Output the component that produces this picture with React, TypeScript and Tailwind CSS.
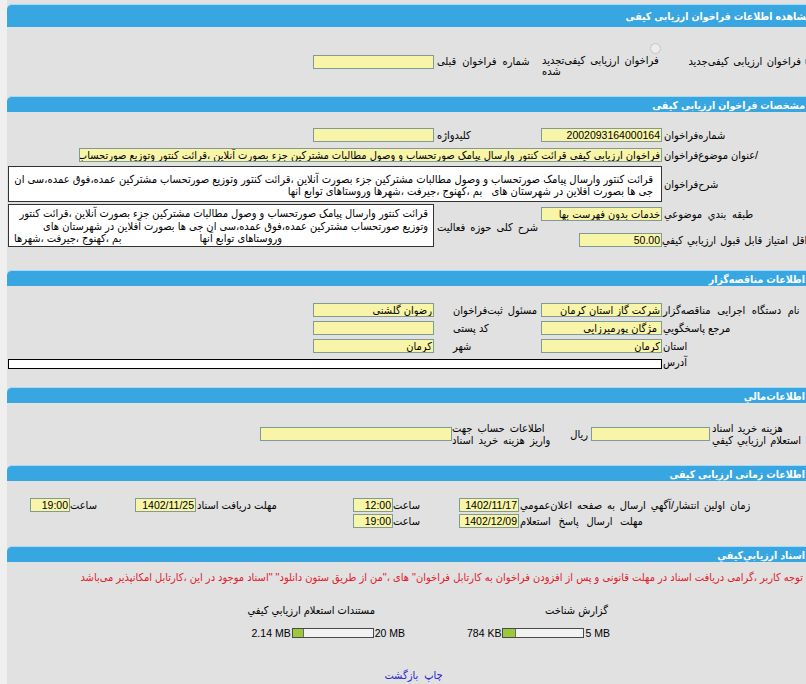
import React from 'react';

const font = "font-['Liberation_Sans','DejaVu_Sans_Condensed','DejaVu_Sans',sans-serif]";

const Bar: React.FC<{ title: string; big?: boolean }> = ({ title, big }) => (
  <div
    className={`flex items-center rounded-t-[5px] border-t border-[#a7daf5] bg-[#38a6e1] text-[10.5px] font-bold text-white ${
      big ? 'h-[23px] pr-[8px]' : 'h-[16px] pr-[15px]'
    }`}
  >
    {title}
  </div>
);

// label that starts at its left edge and runs to the right when long
const L: React.FC<{ children: React.ReactNode; className?: string }> = ({ children, className = '' }) => (
  <div dir="ltr" className={`text-left whitespace-nowrap ${className}`}>
    <span dir="rtl">{children}</span>
  </div>
);

const Box: React.FC<{ value?: string; num?: boolean; className?: string }> = ({ value = '', num, className = '' }) => (
  <div
    className={`h-[14px] overflow-hidden whitespace-nowrap border border-[#7e9c95] bg-[#f8f5a8] px-px leading-[12px] text-black ${
      num ? 'text-[10.5px]' : 'text-[11px]'
    } ${className}`}
  >
    {value}
  </div>
);

const Progress: React.FC<{ used: string; max: string; fill: number }> = ({ used, max, fill }) => (
  <div dir="ltr" className="flex h-[10px] items-center gap-px text-[10.5px]">
    <span>{used}</span>
    <div className="h-[10px] w-[82px] border border-[#4a4a4a] bg-[#f2f2f2]">
      <div className="h-full border-r border-[#6a6a6a] bg-[#9cc83a]" style={{ width: fill }} />
    </div>
    <span>{max}</span>
  </div>
);

const notice =
  'توجه کاربر ،گرامی دریافت اسناد در مهلت قانونی و پس از افزودن فراخوان به کارتابل فراخوان" های ،"من از طریق ستون دانلود" "اسناد موجود در این ،کارتابل امکانپذیر می‌باشد';

const subject =
  'فراخوان ارزيابي کيفي قرائت کنتور وارسال پیامک صورتحساب و وصول مطالبات مشترکین جزء بصورت آنلاین ،قرائت کنتور وتوزیع صورتحساب مشترکین عمده،فوق عمده،سی ان جی ها';

export default function App() {
  return (
    <div className={`h-[684px] w-[806px] overflow-hidden bg-[#efefef] text-[11px] leading-[14px] text-black ${font}`}>
      <div dir="rtl" className="ml-[7px] h-[684px] w-[813px] bg-[#e1e1e1] pt-[4px]">
        <Bar big title="مشاهده اطلاعات فراخوان ارزیابی کیفی" />

        {/* نوع فراخوان */}
        <div className="flex h-[69px] items-start">
          <div className="mt-[27px] flex w-[158px] items-center">
            <span className="mr-[2px] ml-[4px] h-[13px] w-[13px] shrink-0 rounded-full border border-[#888] bg-white" />
            <span className="whitespace-nowrap [word-spacing:1.5px]">فراخوان ارزیابی کیفی‌جدید</span>
          </div>
          <div className="flex w-[121px] flex-col items-start">
            <span className="mt-[16px] mr-px h-[11px] w-[11px] rounded-full border border-[#c4c4c4] bg-[#ececec]" />
            <L className="mt-px mr-[10px] w-[110px] leading-[11px] [word-spacing:2px]">
              فراخوان ارزیابی کیفی‌تجدید
              <br />
              شده
            </L>
          </div>
          <L className="mt-[27px] w-[107px] pl-[3px] [word-spacing:3px]">شماره فراخوان قبلی</L>
          <Box className="mt-[28px] w-[121px]" />
        </div>

        <Bar title="مشخصات فراخوان ارزیابی کیفی" />
        <div className="grid h-[158px] grid-cols-[158px_121px_107px_121px_1fr] grid-rows-[20px_20px_38px_21px_31px] content-start items-center pt-[13px]">
          <L className="col-start-1 row-start-1 pl-[2px]">شماره‌فراخوان</L>
          <Box num className="col-start-2 row-start-1 w-[121px]" value="2002093164000164" />
          <L className="col-start-3 row-start-1 pl-[3px]">کلیدواژه</L>
          <Box className="col-start-4 row-start-1 w-[121px]" />

          <L className="col-start-1 row-start-2 pl-[2px]">/عنوان موضوع‌فراخوان</L>
          <Box className="col-span-4 col-start-2 row-start-2 w-[583px]" value={subject} />

          <L className="col-start-1 row-start-3 pl-[2px]">شرح‌فراخوان</L>
          <div className="col-span-4 col-start-2 row-start-3 h-[36px] w-[654px] overflow-hidden border border-[#333] bg-white pt-[6px] pr-[8px] text-[11.1px] leading-[12px] whitespace-nowrap">
            قرائت کنتور وارسال پیامک صورتحساب و وصول مطالبات مشترکین جزء بصورت آنلاین ،قرائت کنتور وتوزیع صورتحساب مشترکین عمده،فوق عمده،سی ان
            <br />
            جی ها بصورت آفلاین در شهرستان های &nbsp; بم ،کهنوج ،جیرفت ،شهرها وروستاهای توابع آنها
          </div>

          <L className="col-start-1 row-start-4 pl-[2px] [word-spacing:2.5px]">طبقه بندي موضوعي</L>
          <Box className="col-start-2 row-start-4 w-[121px]" value="خدمات بدون فهرست بها" />
          <L className="col-start-3 row-span-2 row-start-4 mt-[17px] self-start pl-[3px] [word-spacing:2px]">شرح کلی حوزه فعالیت</L>
          <div className="col-span-2 col-start-4 row-span-2 row-start-4 mt-px h-[43px] w-[426px] self-start overflow-hidden border border-[#333] bg-white pt-[2px] pr-[5px] pl-[5px] leading-[12.5px] whitespace-nowrap">
            <div>قرائت کنتور وارسال پیامک صورتحساب و وصول مطالبات مشترکین جزء بصورت آنلاین ،قرائت کنتور</div>
            <div>وتوزیع صورتحساب مشترکین عمده،فوق عمده،سی ان جی ها بصورت آفلاین در شهرستان های</div>
            <div className="flex">
              <span className="mr-[146px]">وروستاهای توابع آنها</span>
              <span className="mr-auto">بم ،کهنوج ،جیرفت ،شهرها</span>
            </div>
          </div>

          <L className="col-start-1 row-start-5 [word-spacing:1px]">حداقل امتیاز قابل قبول ارزیابي کیفي</L>
          <Box num className="col-start-2 row-start-5 w-[83px]" value="50.00" />
        </div>

        <Bar title="اطلاعات مناقصه‌گزار" />
        <div className="grid h-[101px] grid-cols-[158px_121px_107px_121px_1fr] grid-rows-[18px_18px_18px_14px] content-start items-center pt-[15px]">
          <L className="col-start-1 row-start-1 pl-px [word-spacing:3.5px]">نام دستگاه اجرایی مناقصه‌گزار</L>
          <Box className="col-start-2 row-start-1 w-[121px]" value="شرکت گاز استان کرمان" />
          <L className="col-start-3 row-start-1 pl-[19px] [word-spacing:2px]">مسئول ثبت‌فراخوان</L>
          <Box className="col-start-4 row-start-1 w-[121px]" value="رضوان گلشنی" />

          <L className="col-start-1 row-start-2 pl-px">مرجع پاسخگويي</L>
          <Box className="col-start-2 row-start-2 w-[121px] pr-[4px]" value="مژگان پورمیرزایی" />
          <L className="col-start-3 row-start-2 pl-[19px]">کد پستی</L>
          <Box className="col-start-4 row-start-2 w-[121px]" />

          <L className="col-start-1 row-start-3 pl-px">استان</L>
          <Box className="col-start-2 row-start-3 w-[121px]" value="کرمان" />
          <L className="col-start-3 row-start-3 pl-[19px]">شهر</L>
          <Box className="col-start-4 row-start-3 w-[121px]" value="کرمان" />

          <L className="col-start-1 row-start-4 pl-px">آدرس</L>
          <div className="col-span-4 col-start-2 row-start-4 h-[10px] w-[654px] self-end border border-black bg-white" />
        </div>

        <Bar title="اطلاعات‌مالي" />
        <div className="h-[62px] pt-[19px]">
          <div className="flex h-[24px] items-center">
            <L className="w-[110px] pl-[2px] leading-[12px] [word-spacing:1px]">
              هزینه خرید اسناد
              <br />
              استعلام ارزیابي کیفي
            </L>
            <Box className="w-[119px]" />
            <div className="w-[47px] pr-[3px]">ریال</div>
            <L className="w-[92px] leading-[12px] [word-spacing:2px]">
              اطلاعات حساب جهت
              <br />
              واریز هزینه خرید اسناد
            </L>
            <Box className="w-[192px]" />
          </div>
        </div>

        <Bar title="اطلاعات زمانی ارزیابی کیفی" />
        <div className="grid h-[65px] grid-cols-[301px_60px_66px_40px_157px_61px_65px_40px] grid-rows-[14px_14px] content-start items-center gap-y-[2px] pt-[17px]">
          <L className="pl-px [word-spacing:1.8px]">زمان اولین انتشار/آگهي ارسال به صفحه اعلان‌عمومي</L>
          <Box num value="1402/11/17" />
          <L>ساعت</L>
          <Box num value="12:00" />
          <L className="pl-px">مهلت دریافت اسناد</L>
          <Box num value="1402/11/25" />
          <L>ساعت</L>
          <Box num value="19:00" />

          <L className="pl-px [word-spacing:4.5px]">مهلت ارسال پاسخ استعلام</L>
          <Box num value="1402/12/09" />
          <L>ساعت</L>
          <Box num value="19:00" />
        </div>

        <Bar title="اسناد ارزیابي‌کیفي" />
        <div className="h-[122px]">
          <div className="mt-[8px] pr-[17px] text-[11px] whitespace-nowrap text-[#e2202a]">{notice}</div>
          <div className="mt-[19px] flex">
            <div className="w-[210px]" />
            <div className="flex w-[170px] flex-col items-start">
              <div className="pr-[2px]">گزارش شناخت</div>
              <div className="mt-[11px]">
                <Progress used="784 KB" max="5 MB" fill={13} />
              </div>
            </div>
            <div className="w-[35px]" />
            <div className="flex w-[200px] flex-col items-start">
              <div className="pr-[30px] whitespace-nowrap">مستندات استعلام ارزیابي کیفي</div>
              <div className="mt-[11px]">
                <Progress used="2.14 MB" max="20 MB" fill={11} />
              </div>
            </div>
          </div>
          <div className="mt-[30px] flex justify-center gap-[6px] text-[#2424d4]">
            <span>چاپ</span>
            <span>بازگشت</span>
          </div>
        </div>
      </div>
    </div>
  );
}
